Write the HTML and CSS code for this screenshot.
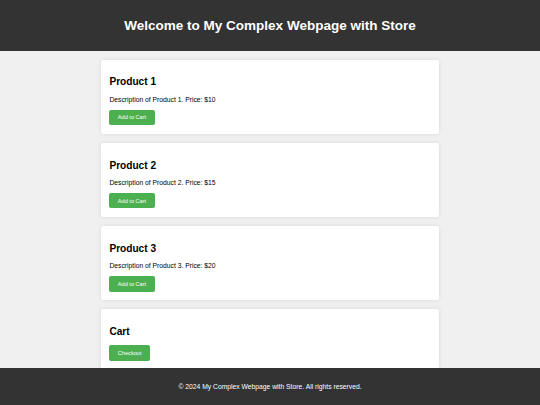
FILE: index.html
```html
<!doctype html>
<html>
<head>
  <meta charset="utf-8">
  <link rel="stylesheet" href="styles.css">
</head>
<body>
<header class="site-header">
  <h1>Welcome to My Complex Webpage with Store</h1>
</header>

<main class="store">
  <section class="product">
    <h2>Product 1</h2>
    <p>Description of Product 1. Price: $10</p>
    <button class="btn">Add to Cart</button>
  </section>
  <section class="product">
    <h2>Product 2</h2>
    <p>Description of Product 2. Price: $15</p>
    <button class="btn">Add to Cart</button>
  </section>
  <section class="product">
    <h2>Product 3</h2>
    <p>Description of Product 3. Price: $20</p>
    <button class="btn">Add to Cart</button>
  </section>
  <section class="product cart">
    <h2>Cart</h2>
    <ul class="cart-items"></ul>
    <button class="btn">Checkout</button>
  </section>
</main>

<footer class="site-footer">
  <p>&copy; 2024 My Complex Webpage with Store. All rights reserved.</p>
</footer>
</body>
</html>
```

FILE: styles.css
```css
body {
  margin : 0;
  font-family : "Liberation Sans", Arial, sans-serif;
  font-size : 6.75px;
  background : #f0f0f0;
  color : #000;
}
.site-header {
  background : #333;
  color : #fff;
  text-align : center;
  padding : 8.8px;
}
.site-header h1 {
  font-size : 2em;
  margin : 0.67em 0;
}
.store {
  max-width : 338px;
  margin : 0 auto;
  padding-bottom : 40px;
}
.product {
  background : #fff;
  margin : 9px 0;
  padding : 8.4px;
  border-radius : 2px;
  box-shadow : 0 0 4px rgba(0, 0, 0, 0.1);
}
.product h2 {
  font-size : 1.5em;
  margin : 0.83em 0;
}
.product p {
  margin : 1em 0;
}
.cart-items {
  list-style : none;
  padding : 0;
  margin : 0;
}
.btn {
  background : #4caf50;
  color : #fff;
  border : none;
  border-radius : 2px;
  padding : 4.9px 8.4px;
  font-family : "Liberation Sans", Arial, sans-serif;
  font-size : 0.833em;
  cursor : pointer;
}
.site-footer {
  position : fixed;
  left : 0;
  bottom : 0;
  width : 100%;
  background : #333;
  color : #fff;
  text-align : center;
  padding : 8.4px 0;
}
.site-footer p {
  margin : 1em 0;
}
```
